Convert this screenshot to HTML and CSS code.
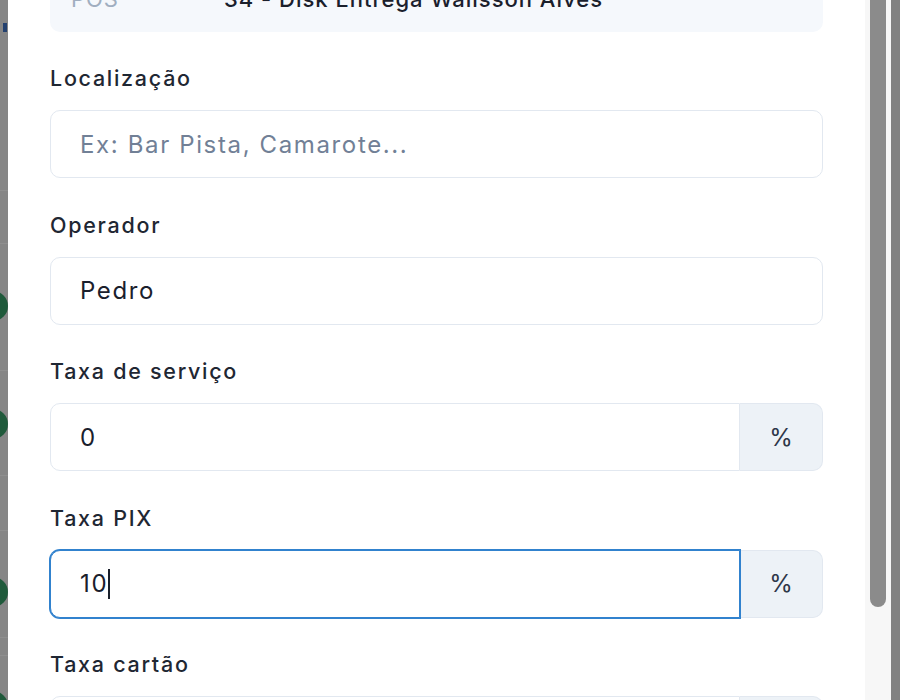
FILE: index.html
```html
<!DOCTYPE html>
<html lang="pt-BR">
<head>
<meta charset="utf-8">
<title>Configurar POS</title>
<link rel="stylesheet" href="styles.css">
</head>
<body>
<div class="page-edge left" aria-hidden="true">
  <span class="deco blue d1"></span>
  <span class="deco rule d2"></span>
  <span class="deco rule d3"></span>
  <span class="deco dot d4"></span>
  <span class="deco rule d5"></span>
  <span class="deco dot d6"></span>
  <span class="deco rule d7"></span>
  <span class="deco rule d8"></span>
  <span class="deco dot d9"></span>
  <span class="deco rule d10"></span>
  <span class="deco rule d11"></span>
  <span class="deco dot d12"></span>
</div>
<div class="modal">
  <div class="modal-body">
    <div class="scroll-content">
      <div class="info-box">
        <span class="info-label">POS</span>
        <span class="info-value">34 - Disk Entrega Walisson Alves</span>
      </div>

      <div class="field">
        <label class="field-label" for="loc">Localização</label>
        <input id="loc" class="input" type="text" placeholder="Ex: Bar Pista, Camarote...">
      </div>

      <div class="field">
        <label class="field-label" for="op">Operador</label>
        <input id="op" class="input" type="text" value="Pedro">
      </div>

      <div class="field">
        <label class="field-label" for="svc">Taxa de serviço</label>
        <div class="input-group">
          <div class="input-wrap"><input id="svc" class="input grouped" type="text" value="0"></div>
          <span class="addon">%</span>
        </div>
      </div>

      <div class="field">
        <label class="field-label" for="pix">Taxa PIX</label>
        <div class="input-group">
          <div class="input-wrap focused-wrap">
            <input id="pix" class="input grouped focused" type="text" value="10">
            <span class="caret"></span>
          </div>
          <span class="addon">%</span>
        </div>
      </div>

      <div class="field">
        <label class="field-label" for="card">Taxa cartão</label>
        <div class="input-group">
          <div class="input-wrap"><input id="card" class="input grouped" type="text" value="0"></div>
          <span class="addon">%</span>
        </div>
      </div>
    </div>
  </div>
  <div class="scrollbar" aria-hidden="true"><div class="thumb"></div></div>
</div>
<div class="page-edge right" aria-hidden="true"></div>
</body>
</html>
```

FILE: styles.css
```css
* { box-sizing: border-box; }

html, body {
  margin: 0;
  height: 700px;
  overflow: hidden;
}

body {
  display: flex;
  background: #868686;
  font-family: Inter, "Noto Sans", "Liberation Sans", sans-serif;
  color: #1a202c;
}

.page-edge {
  flex: none;
  background: #868686;
  height: 700px;
  overflow: hidden;
}

.page-edge.left {
  width: 8px;
  display: flex;
  flex-direction: column;
}

.page-edge.right {
  width: 9px;
  background: #828282;
}

.deco { display: block; flex: none; }

.deco.blue {
  width: 4px;
  height: 9px;
  margin-left: 3px;
  background: #24416f;
}

.deco.rule {
  height: 1px;
  width: 8px;
  background: #8f8f8f;
}

.deco.dot {
  width: 30px;
  height: 30px;
  border-radius: 50%;
  margin-left: -22px;
  background: #1f5a3b;
}

.d1 { margin-top: 23px; }
.d2 { margin-top: 158px; }
.d3 { margin-top: 52px; }
.d4 { margin-top: 47px; }
.d5 { margin-top: 49px; }
.d6 { margin-top: 38px; }
.d7 { margin-top: 36px; }
.d8 { margin-top: 54px; }
.d9 { margin-top: 46px; }
.d10 { margin-top: 30px; }
.d11 { margin-top: 17px; }
.d12 { margin-top: 35px; }

.modal {
  flex: none;
  width: 883px;
  height: 700px;
  background: #ffffff;
  display: flex;
  overflow: hidden;
}

.modal-body {
  flex: 1;
  padding: 0 42px;
  overflow: hidden;
}

.scroll-content {
  margin-top: -32px;
  display: flex;
  flex-direction: column;
  gap: 31.5px;
}

.info-box {
  background: #f5f8fc;
  border-radius: 10px;
  padding: 16px 21px 17.6px;
  display: grid;
  grid-template-columns: 153px 1fr;
  font-size: 22px;
  line-height: 30px;
  font-weight: 500;
  letter-spacing: 0.045em;
}

.info-label { color: #a0aec0; font-weight: 400; }
.info-value { color: #1a202c; }

.field {
  display: flex;
  flex-direction: column;
}

.field-label {
  font-size: 21.5px;
  line-height: 30px;
  font-weight: 500;
  letter-spacing: 0.08em;
  color: #1f2733;
  margin-bottom: 17px;
}

.input {
  display: block;
  width: 100%;
  height: 68px;
  margin: 0;
  padding: 0 29px;
  border: 1px solid #e2e8f0;
  border-radius: 10px;
  background: #ffffff;
  font-family: inherit;
  font-size: 24px;
  letter-spacing: 0.068em;
  color: #1a202c;
  outline: none;
}

.input::placeholder { color: #718096; opacity: 1; }

.input-group {
  display: flex;
  height: 68px;
}

.input-wrap {
  flex: 1;
  position: relative;
}

.input.grouped {
  border-radius: 10px 0 0 10px;
}

.focused-wrap { z-index: 1; }

.input.focused {
  border-color: #3182ce;
  box-shadow: 0 0 0 1px #3182ce;
}

.caret {
  position: absolute;
  left: 58px;
  top: 19px;
  width: 1.5px;
  height: 30px;
  background: #1a202c;
}

.addon {
  flex: none;
  width: 83px;
  display: flex;
  align-items: center;
  justify-content: center;
  background: #edf2f7;
  border: 1px solid #e2e8f0;
  border-left: 0;
  border-radius: 0 10px 10px 0;
  font-size: 24px;
  color: #2d3748;
}

.scrollbar {
  flex: none;
  width: 26px;
  background: #f7f7f7;
  padding-left: 5px;
}

.thumb {
  width: 16px;
  height: 607px;
  background: #8b8b8b;
  border-radius: 0 0 8px 8px;
}
```
